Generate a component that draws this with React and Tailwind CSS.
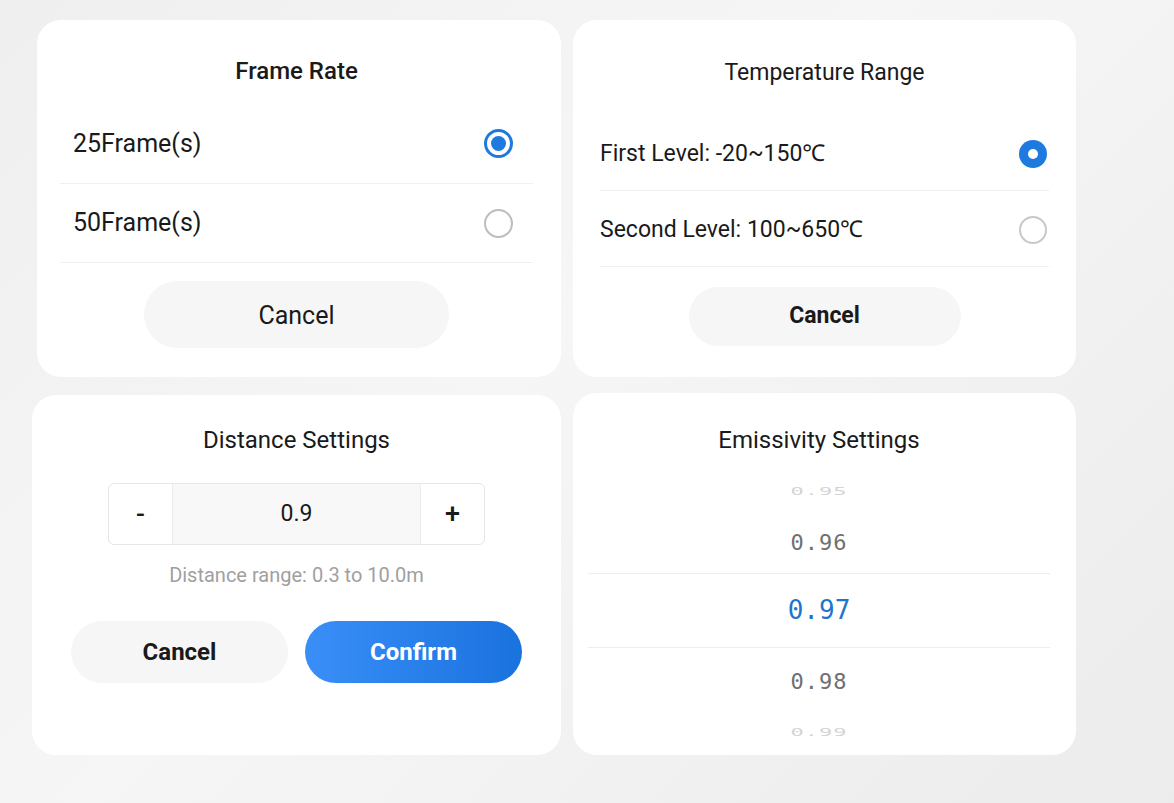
import React from 'react';

const font = { fontFamily: 'Roboto, "Noto Sans", sans-serif' };

const RadioRing = ({ on }) =>
    on ? (
        <span className="w-[29px] h-[29px] rounded-full border-[3px] border-[#1f7ae0] flex items-center justify-center">
            <span className="w-[15px] h-[15px] rounded-full bg-[#1f7ae0]" />
        </span>
    ) : (
        <span className="w-[29px] h-[29px] rounded-full border-2 border-[#bdbdbd]" />
    );

const RadioFilled = ({ on }) =>
    on ? (
        <span className="w-[28px] h-[28px] rounded-full bg-[#1f7ae0] flex items-center justify-center">
            <span className="w-[10px] h-[10px] rounded-full bg-white" />
        </span>
    ) : (
        <span className="w-[28px] h-[28px] rounded-full border-2 border-[#c8c8c8]" />
    );

const App = () => {
    return (
        <div
            className="w-[1174px] h-[803px] overflow-hidden bg-[linear-gradient(135deg,#efefef_0%,#f6f6f6_45%,#f1f1f1_70%,#ececec_100%)] text-[#1a1a1a]"
            style={font}
        >
            <div className="grid grid-cols-[524px_503px] grid-rows-[357px_360px] gap-x-[12px] gap-y-[18px] pt-[20px] pl-[37px]">

                {/* Frame rate */}
                <div className="bg-white rounded-[24px] flex flex-col pl-[23px] pr-[28px]">
                    <h2 className="text-center text-[24px] font-medium pt-[39px] leading-none">Frame Rate</h2>
                    <div className="mt-[21px]">
                        <div className="flex items-center justify-between h-[80px] pl-[13px] pr-[20px] border-b border-[#f0f0f0]">
                            <span className="text-[25px]">25Frame(s)</span>
                            <RadioRing on />
                        </div>
                        <div className="flex items-center justify-between h-[79px] pl-[13px] pr-[20px] border-b border-[#f0f0f0]">
                            <span className="text-[25px]">50Frame(s)</span>
                            <RadioRing />
                        </div>
                    </div>
                    <button className="self-center mt-[18px] w-[305px] h-[67px] pt-[3px] rounded-full bg-[#f6f6f6] text-[25px]">
                        Cancel
                    </button>
                </div>

                {/* Temperature range */}
                <div className="bg-white rounded-[24px] flex flex-col px-[27px]">
                    <h2 className="text-center text-[23px] pt-[41px] leading-none">Temperature Range</h2>
                    <div className="mt-[31px]">
                        <div className="flex items-center justify-between h-[76px] pt-[3px] pr-[2px] border-b border-[#f0f0f0]">
                            <span className="text-[23px]">First Level: -20~150℃</span>
                            <RadioFilled on />
                        </div>
                        <div className="flex items-center justify-between h-[76px] pt-[3px] pr-[2px] border-b border-[#f0f0f0]">
                            <span className="text-[23px]">Second Level: 100~650℃</span>
                            <RadioFilled />
                        </div>
                    </div>
                    <button className="self-center mt-[20px] w-[272px] h-[59px] rounded-full bg-[#f6f6f6] text-[23px] font-bold">
                        Cancel
                    </button>
                </div>

                {/* Distance */}
                <div className="bg-white rounded-[24px] flex flex-col items-center -ml-[5px]">
                    <h2 className="text-center text-[24px] pt-[33px] leading-none">Distance Settings</h2>
                    <div className="mt-[31px] flex w-[377px] h-[62px] border border-[#e6e6e6] rounded-[6px] overflow-hidden">
                        <div className="w-[63px] flex items-center justify-center text-[26px] font-medium">-</div>
                        <div className="flex-1 flex items-center justify-center bg-[#f8f8f8] border-x border-[#ececec] text-[23px]">0.9</div>
                        <div className="w-[63px] flex items-center justify-center text-[27px] font-medium">+</div>
                    </div>
                    <p className="mt-[20px] text-[20px] text-[#a0a0a0] leading-none">Distance range: 0.3 to 10.0m</p>
                    <div className="mt-[36px] flex gap-[17px]">
                        <button className="w-[217px] h-[62px] rounded-full bg-[#f6f6f6] text-[24px] font-bold">Cancel</button>
                        <button className="w-[217px] h-[62px] rounded-full bg-[linear-gradient(90deg,#3a8ff7,#1a72df)] text-white text-[24px] font-bold">
                            Confirm
                        </button>
                    </div>
                </div>

                {/* Emissivity */}
                <div className="bg-white rounded-[24px] flex flex-col pl-[15px] pr-[26px] -mt-[2px]">
                    <h2 className="text-center text-[24px] pt-[35px] leading-none">Emissivity Settings</h2>
                    <div className="mt-[19px] flex flex-col items-center" style={{ fontFamily: '"DejaVu Sans Mono", monospace' }}>
                        <div className="h-[40px] flex items-center text-[22px] tracking-[1px] text-[#d4d4d4] scale-y-[0.45]">0.95</div>
                        <div className="h-[63px] w-full flex items-center justify-center text-[22px] tracking-[1px] text-[#707070] border-b border-[#eeeeee]">0.96</div>
                        <div className="h-[74px] w-full flex items-center justify-center text-[26px] text-[#1f74cf] border-b border-[#eeeeee]">0.97</div>
                        <div className="h-[66px] flex items-center text-[22px] tracking-[1px] text-[#707070]">0.98</div>
                        <div className="h-[36px] flex items-center text-[22px] tracking-[1px] text-[#d4d4d4] scale-y-[0.45]">0.99</div>
                    </div>
                </div>
            </div>
        </div>
    );
};

export default App;
